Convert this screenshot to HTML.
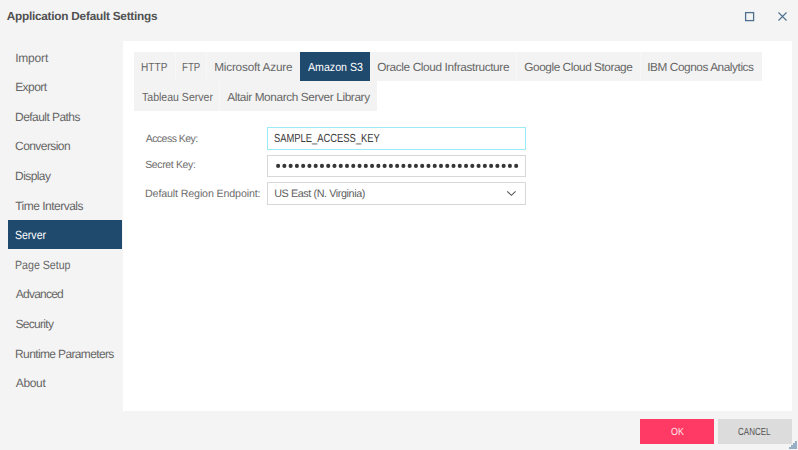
<!DOCTYPE html>
<html><head><meta charset="utf-8">
<style>
html,body{margin:0;padding:0;}
body{width:798px;height:450px;overflow:hidden;background:#f4f4f4;position:relative;font-family:"Liberation Sans",sans-serif;}
.t{position:absolute;white-space:nowrap;line-height:16px;transform-origin:0 0;text-rendering:geometricPrecision;}
.sel{position:absolute;left:8px;top:220px;width:114px;height:29px;background:#1f4a6e;}
.panel{position:absolute;left:123px;top:41px;width:669px;height:370px;background:#fff;}
.tb{position:absolute;background:#f3f3f3;}
.sep{position:absolute;width:1px;background:#f7f7f7;}
.inp{position:absolute;left:267px;width:257px;height:21px;border:1px solid #d8d8d8;background:#fff;}
.btn{position:absolute;top:419px;width:74px;height:25px;}
</style></head><body>
<svg style="position:absolute;left:0;top:0" width="798" height="40">
<rect x="745.6" y="12.6" width="8" height="8" fill="none" stroke="#4f7090" stroke-width="1.3"/>
<path d="M778.5 12.5 L786.5 20.5 M786.5 12.5 L778.5 20.5" stroke="#4f7090" stroke-width="1.1" fill="none"/>
</svg>
<div class="sel"></div>
<div class="panel"></div>
<div class="tb" style="left:134px;top:52px;width:628px;height:29px"></div>
<div class="tb" style="left:134px;top:81px;width:243px;height:30px"></div>
<div class="sep" style="left:175px;top:52px;height:29px"></div>
<div class="sep" style="left:206px;top:52px;height:29px"></div>
<div class="sep" style="left:516px;top:52px;height:29px"></div>
<div class="sep" style="left:640px;top:52px;height:29px"></div>
<div class="sep" style="left:219px;top:81px;height:30px"></div>
<div class="tb" style="left:300px;top:52px;width:70px;height:29px;background:#1f4a6e"></div>
<div class="inp" style="top:127px;border-color:#9aeaf8"></div>
<div class="inp" style="top:155px;height:20px"></div>
<div class="inp" style="top:182px"></div>
<svg style="position:absolute;left:0;top:0" width="798" height="450">
<g fill="#363636"><circle cx="278.10" cy="165.9" r="2.05"/><circle cx="284.37" cy="165.9" r="2.05"/><circle cx="290.63" cy="165.9" r="2.05"/><circle cx="296.90" cy="165.9" r="2.05"/><circle cx="303.16" cy="165.9" r="2.05"/><circle cx="309.43" cy="165.9" r="2.05"/><circle cx="315.69" cy="165.9" r="2.05"/><circle cx="321.96" cy="165.9" r="2.05"/><circle cx="328.22" cy="165.9" r="2.05"/><circle cx="334.49" cy="165.9" r="2.05"/><circle cx="340.75" cy="165.9" r="2.05"/><circle cx="347.01" cy="165.9" r="2.05"/><circle cx="353.28" cy="165.9" r="2.05"/><circle cx="359.55" cy="165.9" r="2.05"/><circle cx="365.81" cy="165.9" r="2.05"/><circle cx="372.08" cy="165.9" r="2.05"/><circle cx="378.34" cy="165.9" r="2.05"/><circle cx="384.61" cy="165.9" r="2.05"/><circle cx="390.87" cy="165.9" r="2.05"/><circle cx="397.13" cy="165.9" r="2.05"/><circle cx="403.40" cy="165.9" r="2.05"/><circle cx="409.67" cy="165.9" r="2.05"/><circle cx="415.93" cy="165.9" r="2.05"/><circle cx="422.20" cy="165.9" r="2.05"/><circle cx="428.46" cy="165.9" r="2.05"/><circle cx="434.73" cy="165.9" r="2.05"/><circle cx="440.99" cy="165.9" r="2.05"/><circle cx="447.25" cy="165.9" r="2.05"/><circle cx="453.52" cy="165.9" r="2.05"/><circle cx="459.79" cy="165.9" r="2.05"/><circle cx="466.05" cy="165.9" r="2.05"/><circle cx="472.32" cy="165.9" r="2.05"/><circle cx="478.58" cy="165.9" r="2.05"/><circle cx="484.85" cy="165.9" r="2.05"/><circle cx="491.11" cy="165.9" r="2.05"/><circle cx="497.38" cy="165.9" r="2.05"/><circle cx="503.64" cy="165.9" r="2.05"/><circle cx="509.90" cy="165.9" r="2.05"/><circle cx="516.17" cy="165.9" r="2.05"/></g>
<path d="M507.2 191.3 L511.4 195.3 L515.6 191.3" stroke="#555" stroke-width="1.1" fill="none"/>
<path d="M795 441h2v8h-8v-2h2v-2h2v-2h2z" fill="#98aec4"/>
</svg>
<div class="btn" style="left:640px;background:#ff3a64"></div>
<div class="btn" style="left:718px;background:#dcdcdc"></div>
<div class="t" style="left:6.66px;top:8.00px;font-size:11.8px;font-weight:bold;color:#505050;letter-spacing:-0.235px">Application Default Settings</div>
<div class="t" style="left:15.13px;top:50.00px;font-size:12px;font-weight:normal;color:#666666;letter-spacing:-0.184px">Import</div>
<div class="t" style="left:15.13px;top:79.01px;font-size:12px;font-weight:normal;color:#666666;letter-spacing:-0.533px">Export</div>
<div class="t" style="left:15.08px;top:109.01px;font-size:12px;font-weight:normal;color:#666666;letter-spacing:-0.553px">Default Paths</div>
<div class="t" style="left:15.09px;top:138.00px;font-size:12px;font-weight:normal;color:#666666;letter-spacing:-0.578px">Conversion</div>
<div class="t" style="left:15.08px;top:168.01px;font-size:12px;font-weight:normal;color:#666666;letter-spacing:-0.586px">Display</div>
<div class="t" style="left:15.25px;top:198.01px;font-size:12px;font-weight:normal;color:#666666;letter-spacing:-0.511px">Time Intervals</div>
<div class="t" style="left:15.42px;top:227.00px;font-size:12px;font-weight:normal;color:#ffffff;letter-spacing:0.000px;transform:scaleX(0.8768)">Server</div>
<div class="t" style="left:15.35px;top:257.01px;font-size:12px;font-weight:normal;color:#666666;letter-spacing:0.000px;transform:scaleX(0.8845)">Page Setup</div>
<div class="t" style="left:15.85px;top:286.01px;font-size:12px;font-weight:normal;color:#666666;letter-spacing:-0.778px">Advanced</div>
<div class="t" style="left:15.44px;top:316.00px;font-size:12px;font-weight:normal;color:#666666;letter-spacing:-0.684px">Security</div>
<div class="t" style="left:15.08px;top:346.01px;font-size:12px;font-weight:normal;color:#666666;letter-spacing:-0.636px">Runtime Parameters</div>
<div class="t" style="left:15.85px;top:375.01px;font-size:12px;font-weight:normal;color:#666666;letter-spacing:-0.368px">About</div>
<div class="t" style="left:141.32px;top:59.00px;font-size:11.8px;font-weight:normal;color:#666666;letter-spacing:0.000px;transform:scaleX(0.8576)">HTTP</div>
<div class="t" style="left:181.50px;top:59.00px;font-size:11.8px;font-weight:normal;color:#666666;letter-spacing:0.000px;transform:scaleX(0.8172)">FTP</div>
<div class="t" style="left:214.17px;top:59.00px;font-size:11.8px;font-weight:normal;color:#666666;letter-spacing:-0.204px">Microsoft Azure</div>
<div class="t" style="left:307.85px;top:59.00px;font-size:11.8px;font-weight:normal;color:#ffffff;letter-spacing:0.000px;transform:scaleX(0.9017)">Amazon S3</div>
<div class="t" style="left:377.17px;top:59.00px;font-size:11.8px;font-weight:normal;color:#666666;letter-spacing:-0.359px">Oracle Cloud Infrastructure</div>
<div class="t" style="left:524.36px;top:59.00px;font-size:11.8px;font-weight:normal;color:#666666;letter-spacing:-0.437px">Google Cloud Storage</div>
<div class="t" style="left:647.25px;top:59.00px;font-size:11.8px;font-weight:normal;color:#666666;letter-spacing:-0.422px">IBM Cognos Analytics</div>
<div class="t" style="left:141.84px;top:89.01px;font-size:11.8px;font-weight:normal;color:#666666;letter-spacing:0.000px;transform:scaleX(0.8935)">Tableau Server</div>
<div class="t" style="left:227.15px;top:89.01px;font-size:11.8px;font-weight:normal;color:#666666;letter-spacing:-0.375px">Altair Monarch Server Library</div>
<div class="t" style="left:145.66px;top:131.01px;font-size:10.5px;font-weight:normal;color:#6e6e6e;letter-spacing:-0.521px">Access Key:</div>
<div class="t" style="left:145.17px;top:157.00px;font-size:10.5px;font-weight:normal;color:#6e6e6e;letter-spacing:-0.353px">Secret Key:</div>
<div class="t" style="left:145.06px;top:186.01px;font-size:10.7px;font-weight:normal;color:#6e6e6e;letter-spacing:-0.146px">Default Region Endpoint:</div>
<div class="t" style="left:274.13px;top:131.01px;font-size:11.7px;font-weight:normal;color:#3a3a3a;letter-spacing:0.000px;transform:scaleX(0.8029)">SAMPLE_ACCESS_KEY</div>
<div class="t" style="left:274.19px;top:186.01px;font-size:10.8px;font-weight:normal;color:#606060;letter-spacing:-0.412px">US East (N. Virginia)</div>
<div class="t" style="left:670.83px;top:425.00px;font-size:10.3px;font-weight:normal;color:#ffe6ec;letter-spacing:0.000px;transform:scaleX(0.8604)">OK</div>
<div class="t" style="left:738.24px;top:425.00px;font-size:10.3px;font-weight:normal;color:#555555;letter-spacing:0.000px;transform:scaleX(0.7778)">CANCEL</div>
</body></html>
